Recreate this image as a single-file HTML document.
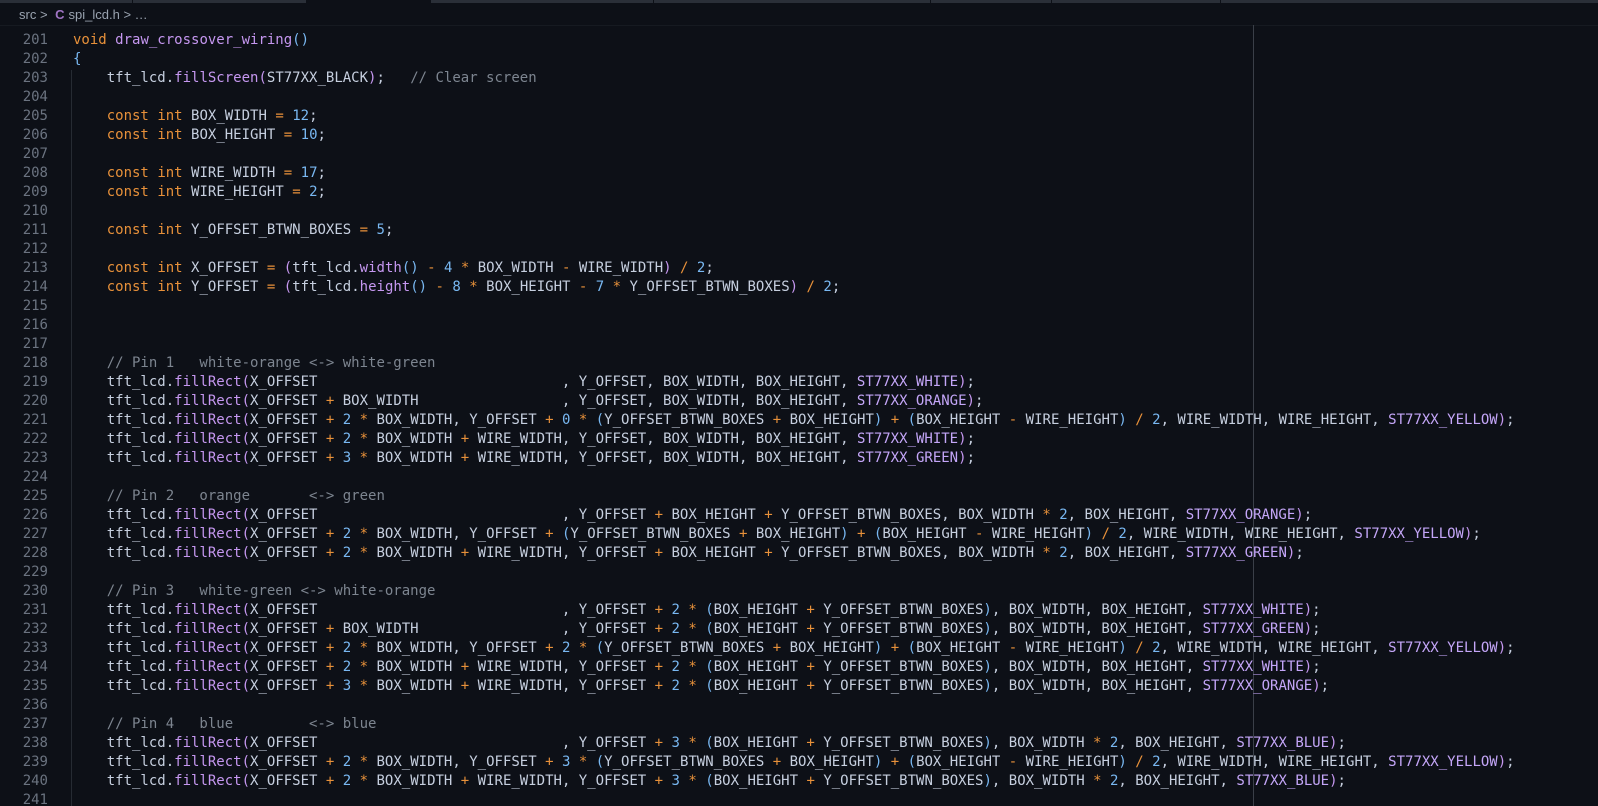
<!DOCTYPE html>
<html><head><meta charset="utf-8"><style>
html,body{margin:0;padding:0;background:#0d1017;width:1598px;height:806px;overflow:hidden}
body{position:relative;font-family:"DejaVu Sans Mono","Liberation Mono",monospace;}
.tabs{position:absolute;left:0;top:0;width:1598px;height:3px;background:#2a2f38}
.tabs .act{position:absolute;left:306px;top:0;width:125px;height:3px;background:#0d1017}
.tabs .sep{position:absolute;top:0;width:1px;height:3px;background:#0d1017}
.crumb{position:absolute;left:19px;top:7px;font-family:"Liberation Sans",sans-serif;font-size:13px;color:#9aa3b0;line-height:16px}
.crumb .C{color:#a074c4;font-weight:bold;margin:0 4px 0 4px}
.ln{position:absolute;left:0;top:31px;width:48px;text-align:right;color:#6b7380;font-size:14px;line-height:19px;white-space:pre}
.code{position:absolute;left:73px;top:31px;color:#c6cfdf;font-size:14px;line-height:19px;white-space:pre}
.ruler{position:absolute;left:1253px;top:25px;width:1px;height:781px;background:#3a3f48}
.guide{position:absolute;left:71px;top:70px;width:1px;height:736px;background:#262b33}
.hdr{position:absolute;left:0;top:25px;width:1598px;height:1px;background:#161a21}
i{font-style:normal}
.k{color:#e8913a}.f{color:#c597f0}.b{color:#79b8f2}.v{color:#c597f0}.o{color:#e8913a}.n{color:#79b8f2}.c{color:#c4a6f8}.m{color:#7d8590}
</style></head><body>
<div class="tabs"><div class="act"></div><div class="sep" style="left:132px"></div><div class="sep" style="left:653px"></div><div class="sep" style="left:930px"></div><div class="sep" style="left:1051px"></div><div class="sep" style="left:1220px"></div></div>
<div class="crumb">src &gt; <span class="C">C</span>spi_lcd.h &gt; …</div>
<div class="hdr"></div>
<div class="guide"></div>
<div class="ruler"></div>
<div class="ln">201
202
203
204
205
206
207
208
209
210
211
212
213
214
215
216
217
218
219
220
221
222
223
224
225
226
227
228
229
230
231
232
233
234
235
236
237
238
239
240
241</div>
<div class="code"><i class=k>void</i> <i class=f>draw_crossover_wiring</i><i class=b>()</i>
<i class=b>{</i>
    tft_lcd.<i class=f>fillScreen</i><i class=v>(</i>ST77XX_BLACK<i class=v>)</i>;   <i class=m>// Clear screen</i>

    <i class=k>const</i> <i class=k>int</i> BOX_WIDTH <i class=o>=</i> <i class=n>12</i>;
    <i class=k>const</i> <i class=k>int</i> BOX_HEIGHT <i class=o>=</i> <i class=n>10</i>;

    <i class=k>const</i> <i class=k>int</i> WIRE_WIDTH <i class=o>=</i> <i class=n>17</i>;
    <i class=k>const</i> <i class=k>int</i> WIRE_HEIGHT <i class=o>=</i> <i class=n>2</i>;

    <i class=k>const</i> <i class=k>int</i> Y_OFFSET_BTWN_BOXES <i class=o>=</i> <i class=n>5</i>;

    <i class=k>const</i> <i class=k>int</i> X_OFFSET <i class=o>=</i> <i class=v>(</i>tft_lcd.<i class=f>width</i><i class=b>()</i> <i class=o>-</i> <i class=n>4</i> <i class=o>*</i> BOX_WIDTH <i class=o>-</i> WIRE_WIDTH<i class=v>)</i> <i class=o>/</i> <i class=n>2</i>;
    <i class=k>const</i> <i class=k>int</i> Y_OFFSET <i class=o>=</i> <i class=v>(</i>tft_lcd.<i class=f>height</i><i class=b>()</i> <i class=o>-</i> <i class=n>8</i> <i class=o>*</i> BOX_HEIGHT <i class=o>-</i> <i class=n>7</i> <i class=o>*</i> Y_OFFSET_BTWN_BOXES<i class=v>)</i> <i class=o>/</i> <i class=n>2</i>;



    <i class=m>// Pin 1   white-orange &lt;-&gt; white-green</i>
    tft_lcd.<i class=f>fillRect</i><i class=v>(</i>X_OFFSET                             , Y_OFFSET, BOX_WIDTH, BOX_HEIGHT, <i class=c>ST77XX_WHITE</i><i class=v>)</i>;
    tft_lcd.<i class=f>fillRect</i><i class=v>(</i>X_OFFSET <i class=o>+</i> BOX_WIDTH                 , Y_OFFSET, BOX_WIDTH, BOX_HEIGHT, <i class=c>ST77XX_ORANGE</i><i class=v>)</i>;
    tft_lcd.<i class=f>fillRect</i><i class=v>(</i>X_OFFSET <i class=o>+</i> <i class=n>2</i> <i class=o>*</i> BOX_WIDTH, Y_OFFSET <i class=o>+</i> <i class=n>0</i> <i class=o>*</i> <i class=b>(</i>Y_OFFSET_BTWN_BOXES <i class=o>+</i> BOX_HEIGHT<i class=b>)</i> <i class=o>+</i> <i class=b>(</i>BOX_HEIGHT <i class=o>-</i> WIRE_HEIGHT<i class=b>)</i> <i class=o>/</i> <i class=n>2</i>, WIRE_WIDTH, WIRE_HEIGHT, <i class=c>ST77XX_YELLOW</i><i class=v>)</i>;
    tft_lcd.<i class=f>fillRect</i><i class=v>(</i>X_OFFSET <i class=o>+</i> <i class=n>2</i> <i class=o>*</i> BOX_WIDTH <i class=o>+</i> WIRE_WIDTH, Y_OFFSET, BOX_WIDTH, BOX_HEIGHT, <i class=c>ST77XX_WHITE</i><i class=v>)</i>;
    tft_lcd.<i class=f>fillRect</i><i class=v>(</i>X_OFFSET <i class=o>+</i> <i class=n>3</i> <i class=o>*</i> BOX_WIDTH <i class=o>+</i> WIRE_WIDTH, Y_OFFSET, BOX_WIDTH, BOX_HEIGHT, <i class=c>ST77XX_GREEN</i><i class=v>)</i>;

    <i class=m>// Pin 2   orange       &lt;-&gt; green</i>
    tft_lcd.<i class=f>fillRect</i><i class=v>(</i>X_OFFSET                             , Y_OFFSET <i class=o>+</i> BOX_HEIGHT <i class=o>+</i> Y_OFFSET_BTWN_BOXES, BOX_WIDTH <i class=o>*</i> <i class=n>2</i>, BOX_HEIGHT, <i class=c>ST77XX_ORANGE</i><i class=v>)</i>;
    tft_lcd.<i class=f>fillRect</i><i class=v>(</i>X_OFFSET <i class=o>+</i> <i class=n>2</i> <i class=o>*</i> BOX_WIDTH, Y_OFFSET <i class=o>+</i> <i class=b>(</i>Y_OFFSET_BTWN_BOXES <i class=o>+</i> BOX_HEIGHT<i class=b>)</i> <i class=o>+</i> <i class=b>(</i>BOX_HEIGHT <i class=o>-</i> WIRE_HEIGHT<i class=b>)</i> <i class=o>/</i> <i class=n>2</i>, WIRE_WIDTH, WIRE_HEIGHT, <i class=c>ST77XX_YELLOW</i><i class=v>)</i>;
    tft_lcd.<i class=f>fillRect</i><i class=v>(</i>X_OFFSET <i class=o>+</i> <i class=n>2</i> <i class=o>*</i> BOX_WIDTH <i class=o>+</i> WIRE_WIDTH, Y_OFFSET <i class=o>+</i> BOX_HEIGHT <i class=o>+</i> Y_OFFSET_BTWN_BOXES, BOX_WIDTH <i class=o>*</i> <i class=n>2</i>, BOX_HEIGHT, <i class=c>ST77XX_GREEN</i><i class=v>)</i>;

    <i class=m>// Pin 3   white-green &lt;-&gt; white-orange</i>
    tft_lcd.<i class=f>fillRect</i><i class=v>(</i>X_OFFSET                             , Y_OFFSET <i class=o>+</i> <i class=n>2</i> <i class=o>*</i> <i class=b>(</i>BOX_HEIGHT <i class=o>+</i> Y_OFFSET_BTWN_BOXES<i class=b>)</i>, BOX_WIDTH, BOX_HEIGHT, <i class=c>ST77XX_WHITE</i><i class=v>)</i>;
    tft_lcd.<i class=f>fillRect</i><i class=v>(</i>X_OFFSET <i class=o>+</i> BOX_WIDTH                 , Y_OFFSET <i class=o>+</i> <i class=n>2</i> <i class=o>*</i> <i class=b>(</i>BOX_HEIGHT <i class=o>+</i> Y_OFFSET_BTWN_BOXES<i class=b>)</i>, BOX_WIDTH, BOX_HEIGHT, <i class=c>ST77XX_GREEN</i><i class=v>)</i>;
    tft_lcd.<i class=f>fillRect</i><i class=v>(</i>X_OFFSET <i class=o>+</i> <i class=n>2</i> <i class=o>*</i> BOX_WIDTH, Y_OFFSET <i class=o>+</i> <i class=n>2</i> <i class=o>*</i> <i class=b>(</i>Y_OFFSET_BTWN_BOXES <i class=o>+</i> BOX_HEIGHT<i class=b>)</i> <i class=o>+</i> <i class=b>(</i>BOX_HEIGHT <i class=o>-</i> WIRE_HEIGHT<i class=b>)</i> <i class=o>/</i> <i class=n>2</i>, WIRE_WIDTH, WIRE_HEIGHT, <i class=c>ST77XX_YELLOW</i><i class=v>)</i>;
    tft_lcd.<i class=f>fillRect</i><i class=v>(</i>X_OFFSET <i class=o>+</i> <i class=n>2</i> <i class=o>*</i> BOX_WIDTH <i class=o>+</i> WIRE_WIDTH, Y_OFFSET <i class=o>+</i> <i class=n>2</i> <i class=o>*</i> <i class=b>(</i>BOX_HEIGHT <i class=o>+</i> Y_OFFSET_BTWN_BOXES<i class=b>)</i>, BOX_WIDTH, BOX_HEIGHT, <i class=c>ST77XX_WHITE</i><i class=v>)</i>;
    tft_lcd.<i class=f>fillRect</i><i class=v>(</i>X_OFFSET <i class=o>+</i> <i class=n>3</i> <i class=o>*</i> BOX_WIDTH <i class=o>+</i> WIRE_WIDTH, Y_OFFSET <i class=o>+</i> <i class=n>2</i> <i class=o>*</i> <i class=b>(</i>BOX_HEIGHT <i class=o>+</i> Y_OFFSET_BTWN_BOXES<i class=b>)</i>, BOX_WIDTH, BOX_HEIGHT, <i class=c>ST77XX_ORANGE</i><i class=v>)</i>;

    <i class=m>// Pin 4   blue         &lt;-&gt; blue</i>
    tft_lcd.<i class=f>fillRect</i><i class=v>(</i>X_OFFSET                             , Y_OFFSET <i class=o>+</i> <i class=n>3</i> <i class=o>*</i> <i class=b>(</i>BOX_HEIGHT <i class=o>+</i> Y_OFFSET_BTWN_BOXES<i class=b>)</i>, BOX_WIDTH <i class=o>*</i> <i class=n>2</i>, BOX_HEIGHT, <i class=c>ST77XX_BLUE</i><i class=v>)</i>;
    tft_lcd.<i class=f>fillRect</i><i class=v>(</i>X_OFFSET <i class=o>+</i> <i class=n>2</i> <i class=o>*</i> BOX_WIDTH, Y_OFFSET <i class=o>+</i> <i class=n>3</i> <i class=o>*</i> <i class=b>(</i>Y_OFFSET_BTWN_BOXES <i class=o>+</i> BOX_HEIGHT<i class=b>)</i> <i class=o>+</i> <i class=b>(</i>BOX_HEIGHT <i class=o>-</i> WIRE_HEIGHT<i class=b>)</i> <i class=o>/</i> <i class=n>2</i>, WIRE_WIDTH, WIRE_HEIGHT, <i class=c>ST77XX_YELLOW</i><i class=v>)</i>;
    tft_lcd.<i class=f>fillRect</i><i class=v>(</i>X_OFFSET <i class=o>+</i> <i class=n>2</i> <i class=o>*</i> BOX_WIDTH <i class=o>+</i> WIRE_WIDTH, Y_OFFSET <i class=o>+</i> <i class=n>3</i> <i class=o>*</i> <i class=b>(</i>BOX_HEIGHT <i class=o>+</i> Y_OFFSET_BTWN_BOXES<i class=b>)</i>, BOX_WIDTH <i class=o>*</i> <i class=n>2</i>, BOX_HEIGHT, <i class=c>ST77XX_BLUE</i><i class=v>)</i>;
</div>
</body></html>
